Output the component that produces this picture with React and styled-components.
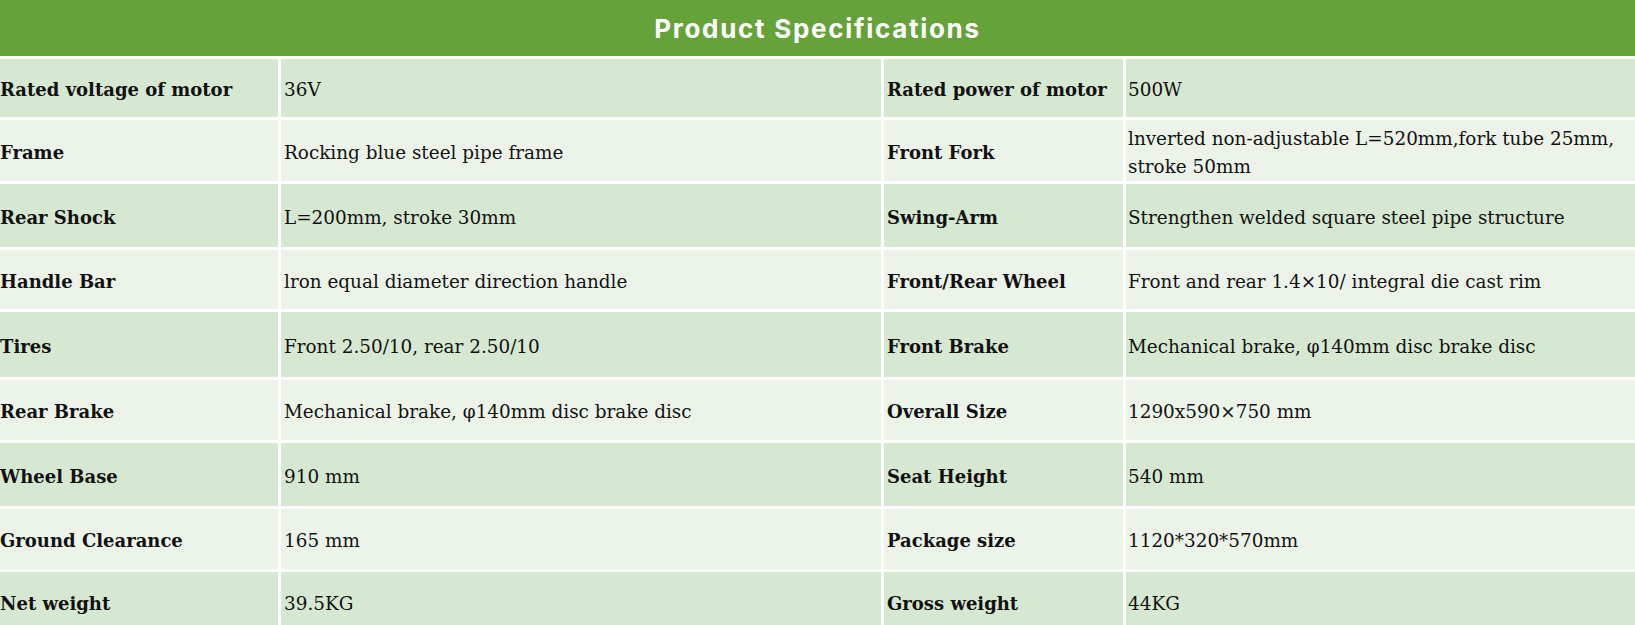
import React from 'react';
import styled, { createGlobalStyle } from 'styled-components';

const GlobalStyle = createGlobalStyle`
  html, body {
    margin: 0;
    padding: 0;
    background: #ffffff;
    overflow: hidden;
  }
`;

const SPECS = [
  { h: 58, a: 'Rated voltage of motor', av: '36V', b: 'Rated power of motor', bv: '500W' },
  {
    h: 61,
    a: 'Frame',
    av: 'Rocking blue steel pipe frame',
    b: 'Front Fork',
    bv: ['lnverted non-adjustable L=520mm,fork tube 25mm,', 'stroke 50mm'],
  },
  { h: 63, a: 'Rear Shock', av: 'L=200mm, stroke 30mm', b: 'Swing-Arm', bv: 'Strengthen welded square steel pipe structure' },
  { h: 59, a: 'Handle Bar', av: 'lron equal diameter direction handle', b: 'Front/Rear Wheel', bv: 'Front and rear 1.4×10/ integral die cast rim' },
  { h: 65, a: 'Tires', av: 'Front 2.50/10, rear 2.50/10', b: 'Front Brake', bv: 'Mechanical brake, φ140mm disc brake disc' },
  { h: 60, a: 'Rear Brake', av: 'Mechanical brake, φ140mm disc brake disc', b: 'Overall Size', bv: '1290x590×750 mm' },
  { h: 63, a: 'Wheel Base', av: '910 mm', b: 'Seat Height', bv: '540 mm' },
  { h: 60, a: 'Ground Clearance', av: '165 mm', b: 'Package size', bv: '1120*320*570mm' },
  { h: 60, a: 'Net weight', av: '39.5KG', b: 'Gross weight', bv: '44KG' },
];

export default function App() {
  return (
    <>
      <GlobalStyle />
      <Table>
        <Title>Product Specifications</Title>
        {SPECS.map((row, index) => (
          <Row key={index} $h={row.h}>
            <Cell $light={index % 2 === 1}>
              <Label>{row.a}</Label>
            </Cell>
            <Cell $light={index % 2 === 1} $pad={3}>
              <Value>{row.av}</Value>
            </Cell>
            <Cell $light={index % 2 === 1} $pad={3}>
              <Label>{row.b}</Label>
            </Cell>
            <Cell $light={index % 2 === 1} $pad={2}>
              <Value>
                {Array.isArray(row.bv)
                  ? row.bv.map((line, i) => <Line key={i}>{line}</Line>)
                  : row.bv}
              </Value>
            </Cell>
          </Row>
        ))}
      </Table>
    </>
  );
}

const Table = styled.div`
  width: 1635px;
  height: 625px;
  display: flex;
  flex-direction: column;
  gap: 3px;
  background: #ffffff;
  overflow: hidden;
`;

const Title = styled.div`
  flex: 0 0 56px;
  display: flex;
  align-items: center;
  justify-content: center;
  background-color: #65a33a;
  color: #ffffff;
  font-family: Inter, 'Noto Sans', sans-serif;
  font-weight: 700;
  font-size: 26px;
  letter-spacing: 1.7px;
`;

const Row = styled.div`
  flex: 0 0 ${(props) => props.$h}px;
  display: grid;
  grid-template-columns: 278px 600px 239px 1fr;
  gap: 3px;
`;

const Cell = styled.div`
  display: flex;
  align-items: center;
  padding-top: 4px;
  padding-left: ${(props) => props.$pad || 0}px;
  background-color: ${(props) => (props.$light ? '#ecf4ea' : '#d7e8d2')};
  color: #111111;
  font-family: 'DejaVu Serif', 'Liberation Serif', serif;
  line-height: 28px;
  overflow: hidden;
`;

const Label = styled.div`
  font-size: 18px;
  font-weight: 700;
  white-space: nowrap;
`;

const Value = styled.div`
  font-size: 18.4px;
  font-weight: 400;
  white-space: nowrap;
`;

const Line = styled.div``;
